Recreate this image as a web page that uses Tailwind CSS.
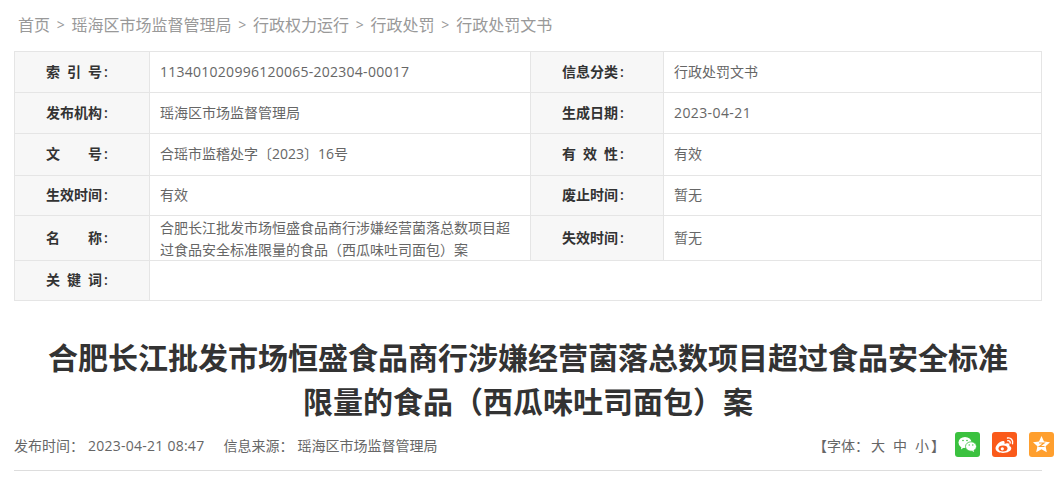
<!DOCTYPE html>
<html lang="zh-CN">
<head>
  <meta charset="UTF-8">
  <title>行政处罚文书</title>
  <script src="https://cdn.jsdelivr.net/npm/@tailwindcss/browser@4"></script>
</head>
<body class="bg-white overflow-hidden font-['Open_Sans','Noto_Sans_CJK_SC',sans-serif]">

  <!-- 面包屑 -->
  <nav class="h-[51px] pl-[18px] pt-[13px] flex items-start text-[16px] leading-[24px] text-[#999]">
    <a>首页</a><span class="mx-[6.75px] text-[14px]">&gt;</span>
    <a>瑶海区市场监督管理局</a><span class="mx-[6.75px] text-[14px]">&gt;</span>
    <a>行政权力运行</a><span class="mx-[6.75px] text-[14px]">&gt;</span>
    <a>行政处罚</a><span class="mx-[6.75px] text-[14px]">&gt;</span>
    <a>行政处罚文书</a>
  </nav>

  <!-- 信息表 -->
  <table class="ml-[14px] w-[1028px] table-fixed border-collapse text-[14px] text-[#666]">
    <colgroup>
      <col class="w-[135px]"><col class="w-[381px]"><col class="w-[133px]"><col>
    </colgroup>
    <tbody>
      <tr class="h-[41px]">
        <th class="border border-[#e5e5e5] bg-[#f7f7f7] pl-[31px] pb-[2px] text-left font-semibold text-[#333]"><span class="inline-block w-[56px] [text-align-last:justify]">索 引 号</span><span class="ml-[2px]">:</span></th>
        <td class="border border-[#e5e5e5] px-[10px] pb-[2px] tracking-[0.26px]">113401020996120065-202304-00017</td>
        <th class="border border-[#e5e5e5] bg-[#f7f7f7] pl-[31px] pb-[2px] text-left font-semibold text-[#333]"><span class="inline-block w-[56px] [text-align-last:justify]">信息分类</span><span class="ml-[2px]">:</span></th>
        <td class="border border-[#e5e5e5] px-[10px] pb-[2px]">行政处罚文书</td>
      </tr>
      <tr class="h-[41px]">
        <th class="border border-[#e5e5e5] bg-[#f7f7f7] pl-[31px] pb-[2px] text-left font-semibold text-[#333]"><span class="inline-block w-[56px] [text-align-last:justify]">发布机构</span><span class="ml-[2px]">:</span></th>
        <td class="border border-[#e5e5e5] px-[10px] pb-[2px]">瑶海区市场监督管理局</td>
        <th class="border border-[#e5e5e5] bg-[#f7f7f7] pl-[31px] pb-[2px] text-left font-semibold text-[#333]"><span class="inline-block w-[56px] [text-align-last:justify]">生成日期</span><span class="ml-[2px]">:</span></th>
        <td class="border border-[#e5e5e5] px-[10px] pb-[2px] tracking-[0.4px]">2023-04-21</td>
      </tr>
      <tr class="h-[42px]">
        <th class="border border-[#e5e5e5] bg-[#f7f7f7] pl-[31px] pb-[3px] text-left font-semibold text-[#333]"><span class="inline-block w-[56px] [text-align-last:justify]">文 号</span><span class="ml-[2px]">:</span></th>
        <td class="border border-[#e5e5e5] px-[10px] pb-[3px]">合瑶市监稽处字〔2023〕16号</td>
        <th class="border border-[#e5e5e5] bg-[#f7f7f7] pl-[31px] pb-[3px] text-left font-semibold text-[#333]"><span class="inline-block w-[56px] [text-align-last:justify]">有 效 性</span><span class="ml-[2px]">:</span></th>
        <td class="border border-[#e5e5e5] px-[10px] pb-[3px]">有效</td>
      </tr>
      <tr class="h-[40px]">
        <th class="border border-[#e5e5e5] bg-[#f7f7f7] pl-[31px] pb-[2px] text-left font-semibold text-[#333]"><span class="inline-block w-[56px] [text-align-last:justify]">生效时间</span><span class="ml-[2px]">:</span></th>
        <td class="border border-[#e5e5e5] px-[10px] pb-[2px]">有效</td>
        <th class="border border-[#e5e5e5] bg-[#f7f7f7] pl-[31px] pb-[2px] text-left font-semibold text-[#333]"><span class="inline-block w-[56px] [text-align-last:justify]">废止时间</span><span class="ml-[2px]">:</span></th>
        <td class="border border-[#e5e5e5] px-[10px] pb-[2px]">暂无</td>
      </tr>
      <tr class="h-[45px]">
        <th class="border border-[#e5e5e5] bg-[#f7f7f7] pl-[31px] pb-[2px] text-left font-semibold text-[#333]"><span class="inline-block w-[56px] [text-align-last:justify]">名 称</span><span class="ml-[2px]">:</span></th>
        <td class="border border-[#e5e5e5] px-[10px] leading-[22px]"><div class="h-[42px]">合肥长江批发市场恒盛食品商行涉嫌经营菌落总数项目超过食品安全标准限量的食品（西瓜味吐司面包）案</div></td>
        <th class="border border-[#e5e5e5] bg-[#f7f7f7] pl-[31px] pb-[2px] text-left font-semibold text-[#333]"><span class="inline-block w-[56px] [text-align-last:justify]">失效时间</span><span class="ml-[2px]">:</span></th>
        <td class="border border-[#e5e5e5] px-[10px] pb-[2px]">暂无</td>
      </tr>
      <tr class="h-[40px]">
        <th class="border border-[#e5e5e5] bg-[#f7f7f7] pl-[31px] pb-[2px] text-left font-semibold text-[#333]"><span class="inline-block w-[56px] [text-align-last:justify]">关 键 词</span><span class="ml-[2px]">:</span></th>
        <td class="border border-[#e5e5e5] px-[10px]" colspan="3"></td>
      </tr>
    </tbody>
  </table>

  <!-- 标题 -->
  <h1 class="mt-[35px] ml-[38px] w-[980px] text-center text-[30px] leading-[44px] font-bold text-[#333]">合肥长江批发市场恒盛食品商行涉嫌经营菌落总数项目超过食品安全标准限量的食品（西瓜味吐司面包）案</h1>

  <!-- 发布信息 -->
  <div class="mt-[7px] ml-[14px] w-[1028px] h-[40px] border-b border-[#ddd] flex items-start relative text-[14px] text-[#666]">
    <div class="pt-[5px] leading-[20px] flex">
      <span class="mr-[4px]">发布时间：</span><span class="tracking-[0.25px]">2023-04-21 08:47</span>
      <span class="ml-[19px] mr-[4px]">信息来源：</span><span>瑶海区市场监督管理局</span>
    </div>
    <div class="absolute right-[-12px] top-[1px] flex items-start">
      <span class="pt-[4px] leading-[20px] mr-[12px] flex">
        <span>【字体：</span><span class="ml-[2px]">大</span><span class="ml-[8px]">中</span><span class="ml-[8px]">小</span><span class="ml-[2px] -mr-[2px]">】</span>
      </span>
      <span class="flex gap-[12px]">
        <a class="w-[25px] h-[25px] rounded-[3px] bg-[#3bc13f]">
          <svg width="25" height="25" viewBox="0 0 25 25" fill="#fff"><ellipse cx="10" cy="10.500" rx="6.500" ry="5.500"/><path d="M6.500 14 6 17.500l3.500-2.500z"/><ellipse cx="16" cy="14.500" rx="5.500" ry="4.700" stroke="#3bc13f" stroke-width=".8"/><path d="M18.500 18l.7 2-2.700-1.300z"/><circle cx="8" cy="8.500" r=".8" fill="#3bc13f"/><circle cx="12" cy="8.500" r=".8" fill="#3bc13f"/><circle cx="14.200" cy="13" r=".7" fill="#3bc13f"/><circle cx="17.800" cy="13" r=".7" fill="#3bc13f"/></svg>
        </a>
        <a class="w-[25px] h-[25px] rounded-[3px] bg-[#fa5a1a]">
          <svg width="25" height="25" viewBox="0 0 25 25" fill="none"><path d="M11 21c-4 0-7.500-1.800-7.500-4.700C3.500 13.500 8 9 11 9c2 0 1.800 2 1.500 3 2-1 5-1 5 1 0 .6-.2 1-.2 1 1.500.5 2 1.400 2 2.300C19.300 19 15.500 21 11 21z" fill="#fff"/><ellipse cx="11" cy="16.500" rx="4.500" ry="3" fill="#fa5a1a"/><circle cx="10.300" cy="16.800" r="1.600" fill="#fff"/><path d="M15.500 6c3.200-.7 6 2.200 5 5.700M15.800 8.700c1.500-.3 2.700 1 2.300 2.400" stroke="#fff" stroke-width="1.400" stroke-linecap="round"/></svg>
        </a>
        <a class="w-[25px] h-[25px] rounded-[3px] bg-[#ff9f2e]">
          <svg width="25" height="25" viewBox="0 0 25 25"><path d="M12.500 4l2.500 5.400 6 .8-4.400 4 1.200 6-5.300-3-5.300 3 1.200-6-4.400-4 6-.8z" fill="#fff"/><path d="M10 11h5l-4.500 3.500h5" stroke="#ff9f2e" fill="none" stroke-width="1.200"/></svg>
        </a>
      </span>
    </div>
  </div>
</body>
</html>
